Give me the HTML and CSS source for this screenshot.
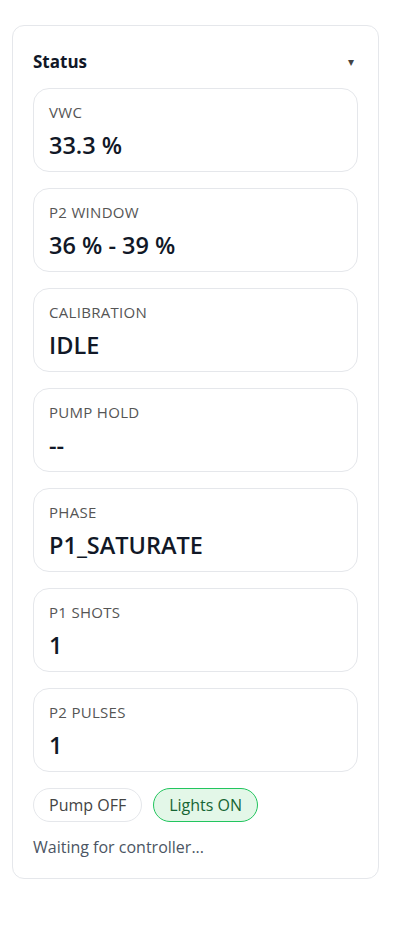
FILE: index.html
```html
<!DOCTYPE html>
<html>
<head>
<meta charset="utf-8">
<link rel="stylesheet" href="styles.css">
</head>
<body>
<section class="panel">
  <header class="panel-head">
    <h2 class="panel-title">Status</h2>
    <span class="caret">▾</span>
  </header>
  <div class="stat"><div class="stat-label">VWC</div><div class="stat-value">33.3 %</div></div>
  <div class="stat"><div class="stat-label">P2 WINDOW</div><div class="stat-value">36 % - 39 %</div></div>
  <div class="stat"><div class="stat-label">CALIBRATION</div><div class="stat-value">IDLE</div></div>
  <div class="stat"><div class="stat-label">PUMP HOLD</div><div class="stat-value">--</div></div>
  <div class="stat"><div class="stat-label">PHASE</div><div class="stat-value">P1_SATURATE</div></div>
  <div class="stat"><div class="stat-label">P1 SHOTS</div><div class="stat-value">1</div></div>
  <div class="stat"><div class="stat-label">P2 PULSES</div><div class="stat-value">1</div></div>
  <div class="pills">
    <span class="pill">Pump OFF</span>
    <span class="pill pill-on">Lights ON</span>
  </div>
  <p class="note">Waiting for controller...</p>
</section>
</body>
</html>
```
FILE: styles.css
```css
html, body { margin: 0; background: #fff; }
body {
  padding: 25px 29px 40px 12px;
  font-family: "Open Sans", "Noto Sans", sans-serif;
  color: #111827;
}
.panel {
  border: 1px solid #e5e7eb;
  border-radius: 12px;
  padding: 18px 20px 20px 20px;
  display: flex;
  flex-direction: column;
  gap: 16px;
}
.panel-head {
  display: flex;
  justify-content: space-between;
  align-items: center;
  height: 30px;
  margin-top: 2px;
  margin-bottom: -4px;
}
.panel-title {
  margin: 0;
  font-size: 17px;
  font-weight: 700;
  color: #111827;
}
.caret {
  font-size: 12px;
  color: #444;
  margin-right: 4px;
}
.stat {
  border: 1px solid #e5e7eb;
  border-radius: 16px;
  padding: 13px 15px 11px;
}
.stat-label {
  font-size: 15px;
  letter-spacing: 0.3px;
  color: #555;
  line-height: 20px;
}
.stat-value {
  font-size: 23.5px;
  font-weight: 600;
  line-height: 30px;
  margin-top: 8px;
  color: #111827;
}
.pills {
  display: flex;
  gap: 11px;
}
.pill {
  border: 1px solid #e5e7eb;
  border-radius: 999px;
  padding: 0 15px;
  height: 32px;
  line-height: 32px;
  font-size: 16px;
  color: #444;
}
.pill-on {
  background: #e3f7e8;
  border-color: #22c55e;
  color: #166534;
}
.note {
  margin: -2px 0 0;
  font-size: 16px;
  color: #4b5563;
  line-height: 22px;
}
```
